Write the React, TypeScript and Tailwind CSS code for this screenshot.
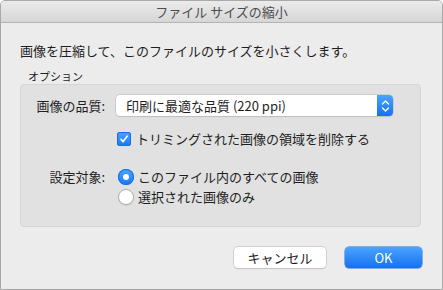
import React, { useState } from "react";

const jp = { fontFamily: '"Noto Sans CJK JP", "Noto Sans", sans-serif' };

const Check = ({ checked }: { checked: boolean }) => (
  <span
    className={
      checked
        ? "flex h-[14px] w-[14px] items-center justify-center rounded-[3px] bg-gradient-to-b from-[#4aa4ff] to-[#1776f6] shadow-[inset_0_0_0_1px_#1a6fe0]"
        : "h-[14px] w-[14px] rounded-[3px] border border-[#b5b5b5] bg-white"
    }
  >
    {checked && (
      <svg width="10" height="10" viewBox="0 0 10 10">
        <path d="M2 5.3 L4.1 7.6 L8.2 2.2" fill="none" stroke="white" strokeWidth="1.7" strokeLinecap="round" strokeLinejoin="round" />
      </svg>
    )}
  </span>
);

const Radio = ({ on }: { on: boolean }) => (
  <span
    className={
      on
        ? "flex h-[16px] w-[16px] items-center justify-center rounded-full bg-gradient-to-b from-[#4aa4ff] to-[#1776f6] shadow-[inset_0_0_0_1px_#1a6fe0]"
        : "h-[16px] w-[16px] rounded-full border border-[#b0b0b0] bg-white shadow-[0_1px_1px_rgba(0,0,0,0.08)]"
    }
  >
    {on && <span className="h-[6px] w-[6px] rounded-full bg-white" />}
  </span>
);

export default function App() {
  const [trim, setTrim] = useState(true);
  const [target, setTarget] = useState(0);

  return (
    <div
      className="flex h-[290px] w-[443px] flex-col overflow-hidden rounded-t-[5px] border border-[#a9a9a9] bg-[#ececec] text-[13px] leading-[16px] text-[#1e1e1e]"
      style={jp}
    >
      {/* タイトルバー */}
      <div className="flex h-[22px] shrink-0 items-center justify-center border-b border-[#b4b4b4] bg-gradient-to-b from-[#ebebeb] to-[#d6d6d6] text-[13px] text-[#4d4d4d]">
        ファイル サイズの縮小
      </div>

      <div className="flex flex-col px-[19px] pt-[20px]">
        <p className="leading-[16px]">画像を圧縮して、このファイルのサイズを小さくします。</p>

        <div className="mt-[10px] pl-[8px] text-[11px] leading-[14px]">オプション</div>

        <div className="mt-[1px] w-[401px] rounded-[4px] border border-[#d6d6d6] bg-[#e1e1e1] pb-[19px] pr-[27px] pt-[10px]">
          <div className="grid grid-cols-[84px_1fr] items-center gap-x-[11px]">
            <span className="text-right">画像の品質:</span>
            <div className="flex h-[21px] items-stretch overflow-hidden rounded-[4px] bg-white shadow-[0_0_0_0.5px_#b8b8b8,0_1px_1px_rgba(0,0,0,0.12)]">
              <span className="flex flex-1 items-center pl-[10px]">印刷に最適な品質 (220 ppi)</span>
              <span className="flex w-[16px] items-center justify-center bg-gradient-to-b from-[#4aa4ff] to-[#1570f0]">
                <svg width="9" height="14" viewBox="0 0 9 14">
                  <path d="M1.5 5 L4.5 2 L7.5 5 M1.5 9 L4.5 12 L7.5 9" fill="none" stroke="white" strokeWidth="1.4" strokeLinecap="round" strokeLinejoin="round" />
                </svg>
              </span>
            </div>

            <span />
            <label className="mt-[15px] flex h-[16px] cursor-default items-center gap-[5px]" onClick={() => setTrim(!trim)}>
              <span className="ml-[1px]">
                <Check checked={trim} />
              </span>
              <span>トリミングされた画像の領域を削除する</span>
            </label>

            <span className="mt-[20px] self-start text-right leading-[20px]">設定対象:</span>
            <div className="mt-[20px] flex flex-col">
              {["このファイル内のすべての画像", "選択された画像のみ"].map((t, i) => (
                <label key={t} className="flex h-[20px] items-center gap-[4px] pl-[2px]" onClick={() => setTarget(i)}>
                  <Radio on={target === i} />
                  <span>{t}</span>
                </label>
              ))}
            </div>
          </div>
        </div>

        <div className="mt-[20px] flex justify-end gap-[19px] pr-[1px]">
          <button className="h-[21px] w-[92px] rounded-[4px] bg-white text-[13px] shadow-[0_0_0_0.5px_#b5b5b5,0_1px_1px_rgba(0,0,0,0.12)]">
            キャンセル
          </button>
          <button className="h-[21px] w-[77px] rounded-[4px] bg-gradient-to-b from-[#4aa4ff] to-[#1570f0] text-[13px] text-white shadow-[0_0_0_0.5px_#1a6fe0]">
            OK
          </button>
        </div>
      </div>
    </div>
  );
}
